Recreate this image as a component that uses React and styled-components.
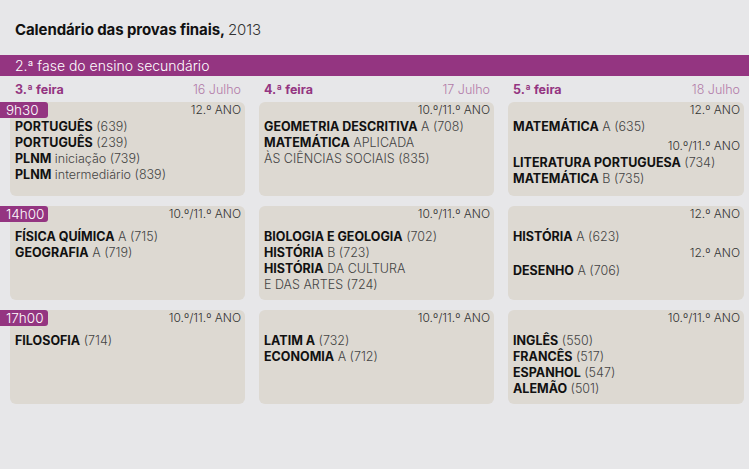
import React from 'react';
import styled, { createGlobalStyle } from 'styled-components';

const GlobalStyle = createGlobalStyle`
	html, body {
		margin: 0;
		padding: 0;
		background: #e7e7e9;
	}
	body {
		font-family: Inter, "Liberation Sans", Arial, sans-serif;
		-webkit-font-smoothing: antialiased;
	}
`;

const PURPLE = '#943581';

const Page = styled.div`
	width: 749px;
	height: 469px;
	background: #e7e7e9;
	padding-top: 20px;
	box-sizing: border-box;
`;

const Title = styled.h1`
	margin: 0 0 15px 15px;
	font-size: 15px;
	line-height: 20px;
	font-weight: 700;
	color: #111;
	letter-spacing: -0.1px;

	span {
		font-weight: 300;
		color: #333;
	}
`;

const PhaseBar = styled.div`
	height: 21px;
	line-height: 21px;
	background: ${PURPLE};
	color: #fff;
	font-size: 14px;
	font-weight: 300;
	padding-left: 15px;
`;

const Grid = styled.div`
	display: grid;
	grid-template-columns: 235px 235px 236px;
	column-gap: 14px;
	row-gap: 10px;
	padding-left: 10px;
`;

const DayHead = styled.div`
	display: flex;
	justify-content: space-between;
	align-items: center;
	height: 26px;
	padding: 0 4px 0 5px;
	margin-bottom: -10px;
	font-size: 12.5px;
`;

const DayName = styled.span`
	font-weight: 700;
	color: ${PURPLE};
`;

const DayDate = styled.span`
	font-weight: 300;
	color: #b27ba8;
`;

const Card = styled.div`
	position: relative;
	height: 94px;
	box-sizing: border-box;
	background: #ddd9d2;
	border-radius: 6px;
	padding: 0 4px 0 5px;
`;

const TimeBadge = styled.div`
	position: absolute;
	left: -10px;
	top: 0;
	width: 48px;
	height: 16px;
	box-sizing: border-box;
	padding-left: 6px;
	background: ${PURPLE};
	border-radius: 0 3px 3px 0;
	color: #fff;
	font-size: 13.5px;
	font-weight: 300;
	line-height: 16px;
`;

const Year = styled.div`
	text-align: right;
	font-size: 12px;
	line-height: 16px;
	font-weight: 300;
	color: #333;
	margin-top: ${(p) => p.$top}px;
`;

const Subjects = styled.div`
	margin-top: ${(p) => p.$top}px;
	font-size: 12.5px;
	line-height: 16px;
	color: #444;
	font-weight: 300;
`;

const Line = styled.div`
	white-space: nowrap;

	b {
		font-weight: 700;
		color: #111;
	}
`;

const days = [
	{ name: '3.ª feira', date: '16 Julho' },
	{ name: '4.ª feira', date: '17 Julho' },
	{ name: '5.ª feira', date: '18 Julho' },
];

const rows = [
	{
		time: '9h30',
		cards: [
			[{ year: '12.º ANO', gap: 1, items: [['PORTUGUÊS', ' (639)'], ['PORTUGUÊS', ' (239)'], ['PLNM', ' iniciação (739)'], ['PLNM', ' intermediário (839)']] }],
			[{ year: '10.º/11.º ANO', gap: 1, items: [['GEOMETRIA DESCRITIVA', ' A (708)'], ['MATEMÁTICA', ' APLICADA'], ['', 'ÀS CIÊNCIAS SOCIAIS (835)']] }],
			[
				{ year: '12.º ANO', gap: 1, items: [['MATEMÁTICA', ' A (635)']] },
				{ year: '10.º/11.º ANO', top: 3, gap: 1, items: [['LITERATURA PORTUGUESA', ' (734)'], ['MATEMÁTICA', ' B (735)']] },
			],
		],
	},
	{
		time: '14h00',
		cards: [
			[{ year: '10.º/11.º ANO', gap: 7, items: [['FÍSICA QUÍMICA', ' A (715)'], ['GEOGRAFIA', ' A (719)']] }],
			[{ year: '10.º/11.º ANO', gap: 7, items: [['BIOLOGIA E GEOLOGIA', ' (702)'], ['HISTÓRIA', ' B (723)'], ['HISTÓRIA', ' DA CULTURA'], ['', 'E DAS ARTES (724)']] }],
			[
				{ year: '12.º ANO', gap: 7, items: [['HISTÓRIA', ' A (623)']] },
				{ year: '12.º ANO', top: 0, gap: 2, items: [['DESENHO', ' A (706)']] },
			],
		],
	},
	{
		time: '17h00',
		cards: [
			[{ year: '10.º/11.º ANO', gap: 7, items: [['FILOSOFIA', ' (714)']] }],
			[{ year: '10.º/11.º ANO', gap: 7, items: [['LATIM A', ' (732)'], ['ECONOMIA', ' A (712)']] }],
			[{ year: '10.º/11.º ANO', gap: 7, items: [['INGLÊS', ' (550)'], ['FRANCÊS', ' (517)'], ['ESPANHOL', ' (547)'], ['ALEMÃO', ' (501)']] }],
		],
	},
];

function ExamCard({ time, groups }) {
	return <Card>
		{time && <TimeBadge>{time}</TimeBadge>}
		{groups.map((group, i) => <React.Fragment key={i}>
			<Year $top={group.top || 0}>{group.year}</Year>
			<Subjects $top={group.gap}>
				{group.items.map(([bold, rest], j) => <Line key={j}>
					{bold && <b>{bold}</b>}{rest}
				</Line>)}
			</Subjects>
		</React.Fragment>)}
	</Card>;
}

export default function App() {
	return <Page>
		<GlobalStyle />
		<Title>Calendário das provas finais, <span>2013</span></Title>
		<PhaseBar>2.ª fase do ensino secundário</PhaseBar>
		<Grid>
			{days.map((day) => <DayHead key={day.name}>
				<DayName>{day.name}</DayName>
				<DayDate>{day.date}</DayDate>
			</DayHead>)}
			{rows.map((row) => row.cards.map((groups, col) => <ExamCard
				key={row.time + col}
				time={col === 0 ? row.time : null}
				groups={groups}
			/>))}
		</Grid>
	</Page>;
}
